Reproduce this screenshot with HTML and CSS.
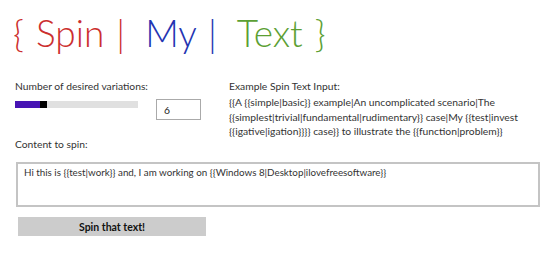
FILE: index.html
```html
<!DOCTYPE html>
<html>
<head>
  <title>Spin My Text</title>
  <link rel="stylesheet" href="styles.css">
</head>
<body>
  <h1 id="title">
    <span class="red">{ Spin |</span>
    <span class="blue">My |</span>
    <span class="green">Text }</span>
  </h1>

  <div id="options">
    <div id="variations">
      <div class="label">Number of desired variations:</div>
      <div class="slider-row">
        <div class="slider">
          <div class="slider-fill" style="width: 25px"></div>
          <div class="slider-thumb"></div>
        </div>
        <input class="count" type="text" value="6">
      </div>
      <div class="label content-label">Content to spin:</div>
    </div>
    <div id="example">
      <div class="label">Example Spin Text Input:</div>
      <p>{{A {{simple|basic}} example|An uncomplicated scenario|The {{simplest|trivial|fundamental|rudimentary}} case|My {{test|invest {{igative|igation}}}} case}} to illustrate the {{function|problem}}</p>
    </div>
  </div>

  <textarea id="content">Hi this is {{test|work}} and, I am working on {{Windows 8|Desktop|ilovefreesoftware}}</textarea>

  <button id="spin">Spin that text!</button>
</body>
</html>
```

FILE: styles.css
```css
body {
  font-family: Lato, sans-serif;
  background-color: #fff;
  color: #333;
  margin: 0;
  padding: 0 9px 0 15px;
}
#title {
  font-weight: 300;
  font-size: 37px;
  margin: 8px 0 0 -2px;
  line-height: 50px;
  word-spacing: 2px;
  display: flex;
  gap: 20px;
}
.red { color: #cc2f2f; }
.blue { color: #2434b2; }
.green { color: #5c9f34; }
.label {
  font-size: 10.3px;
  color: #333;
  line-height: 14px;
}
#options {
  display: grid;
  grid-template-columns: 214px 305px;
  margin-top: 21px;
}
.slider-row {
  display: flex;
  align-items: flex-start;
  gap: 18px;
}
.slider {
  width: 123px;
  height: 7px;
  margin-top: 8px;
  background: #e0e0e0;
  display: flex;
}
.slider-fill {
  background: #4714b4;
}
.slider-thumb {
  width: 7px;
  background: #000;
}
.count {
  box-sizing: border-box;
  width: 45px;
  height: 21px;
  margin: 6px 0 0 0;
  border: 1px solid #aaa;
  padding: 0 7px;
  font-family: Lato, sans-serif;
  font-size: 10.3px;
  color: #222;
}
.content-label {
  margin-top: 17px;
}
#example p {
  font-size: 10.3px;
  line-height: 14.5px;
  margin: 2px 0 0 0;
  color: #333;
}
#content {
  display: block;
  box-sizing: border-box;
  width: 524px;
  height: 45px;
  margin: 11px 0 0 1px;
  border: 2px solid #c4c4c4;
  padding: 1px 6px;
  resize: none;
  font-family: Lato, sans-serif;
  font-size: 9.8px;
  line-height: 14px;
  color: #333;
}
#spin {
  display: block;
  width: 188px;
  height: 19px;
  margin: 10px 0 0 3px;
  border: none;
  background: #ccc;
  font-family: Lato, sans-serif;
  font-weight: 700;
  font-size: 10.5px;
  color: #111;
  padding: 0;
}
```
